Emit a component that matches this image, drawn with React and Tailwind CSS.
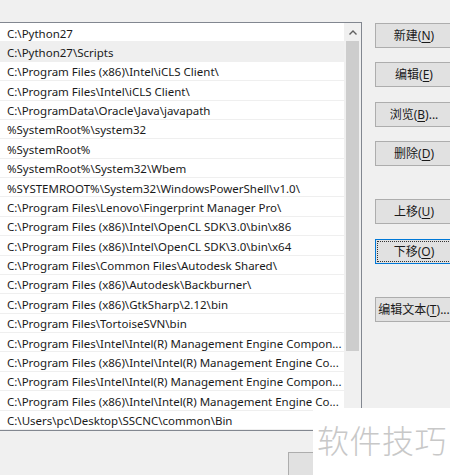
const paths = [
  "C:\\Python27",
  "C:\\Python27\\Scripts",
  "C:\\Program Files (x86)\\Intel\\iCLS Client\\",
  "C:\\Program Files\\Intel\\iCLS Client\\",
  "C:\\ProgramData\\Oracle\\Java\\javapath",
  "%SystemRoot%\\system32",
  "%SystemRoot%",
  "%SystemRoot%\\System32\\Wbem",
  "%SYSTEMROOT%\\System32\\WindowsPowerShell\\v1.0\\",
  "C:\\Program Files\\Lenovo\\Fingerprint Manager Pro\\",
  "C:\\Program Files (x86)\\Intel\\OpenCL SDK\\3.0\\bin\\x86",
  "C:\\Program Files (x86)\\Intel\\OpenCL SDK\\3.0\\bin\\x64",
  "C:\\Program Files\\Common Files\\Autodesk Shared\\",
  "C:\\Program Files (x86)\\Autodesk\\Backburner\\",
  "C:\\Program Files (x86)\\GtkSharp\\2.12\\bin",
  "C:\\Program Files\\TortoiseSVN\\bin",
  "C:\\Program Files\\Intel\\Intel(R) Management Engine Compon...",
  "C:\\Program Files (x86)\\Intel\\Intel(R) Management Engine Co...",
  "C:\\Program Files\\Intel\\Intel(R) Management Engine Compon...",
  "C:\\Program Files (x86)\\Intel\\Intel(R) Management Engine Co...",
  "C:\\Users\\pc\\Desktop\\SSCNC\\common\\Bin",
];

// label, accelerator key, suffix, top margin
const buttons = [
  { label: "新建", key: "N", tail: "", mt: "mt-px" },
  { label: "编辑", key: "E", tail: "", mt: "mt-[14px]" },
  { label: "浏览", key: "B", tail: "...", mt: "mt-[15px]" },
  { label: "删除", key: "D", tail: "", mt: "mt-[14px]" },
  { label: "上移", key: "U", tail: "", mt: "mt-[33px]" },
  { label: "下移", key: "O", tail: "", mt: "mt-[15px]", focused: true },
  { label: "编辑文本", key: "T", tail: "...", mt: "mt-[33px]" },
];

const font = {
  fontFamily: '"Noto Sans", "Noto Sans CJK SC", sans-serif',
};

function WinButton({ label, accel, tail, mt, focused }) {
  return (
    <div
      className={`${mt} h-[25px] w-[78px] shrink-0 flex items-center justify-center text-[12px] text-[#1a1a1a] bg-[#e1e1e1] border ${
        focused ? "border-[#0078d7]" : "border-[#adadad]"
      }`}
    >
      <div
        className={`h-full w-full flex items-center justify-center whitespace-nowrap ${
          focused ? "outline-1 outline-dotted outline-[#333] -outline-offset-2" : ""
        }`}
      >
        {label}(<span className="underline underline-offset-2">{accel}</span>){tail}
      </div>
    </div>
  );
}

export default function App() {
  return (
    <div
      className="relative w-[450px] h-[475px] overflow-hidden bg-[#f0f0f0]"
      style={font}
    >
      <div className="flex pt-[22px]">
        {/* path list with scrollbar */}
        <div className="w-[362px] h-[409px] shrink-0 flex border border-l-0 border-[#828790] bg-white">
          <div className="flex-1 flex flex-col">
            {paths.map((p, i) => (
              <div
                key={i}
                className={`h-[19.38px] shrink-0 flex items-center pl-[7px] pt-[2px] text-[11.5px] text-[#1a1a1a] whitespace-nowrap overflow-hidden border-b border-[#efefef] ${
                  i === 1 ? "bg-[#efefef]" : ""
                }`}
              >
                {p}
              </div>
            ))}
          </div>
          <div className="w-[17px] shrink-0 bg-[#f0f0f0] flex flex-col">
            <div className="h-[18px] flex items-center justify-center">
              <svg width="8" height="5" viewBox="0 0 8 5">
                <path d="M0.5 4.5 L4 1 L7.5 4.5" fill="none" stroke="#606060" strokeWidth="1.4" />
              </svg>
            </div>
            <div className="mx-[2px] h-[310px] bg-[#cdcdcd]" />
          </div>
        </div>

        {/* action buttons */}
        <div className="ml-[13px] flex flex-col">
          {buttons.map((b) => (
            <WinButton
              key={b.key}
              label={b.label}
              accel={b.key}
              tail={b.tail}
              mt={b.mt}
              focused={b.focused}
            />
          ))}
        </div>
      </div>

      {/* bottom dialog button, partly hidden */}
      <div className="ml-[288px] mt-[21px] w-[78px] h-[25px] bg-[#e1e1e1] border border-[#adadad]" />

      {/* watermark */}
      <div className="absolute left-[313px] top-[408px] w-[137px] h-[67px] bg-white flex items-start pt-[15px] pl-[4px]">
        <span
          className="text-[32px] leading-none text-[#c8c8c8] tracking-[0.5px]"
          style={{ fontFamily: '"Noto Sans CJK SC", sans-serif', fontWeight: 300 }}
        >
          软件技巧
        </span>
      </div>
    </div>
  );
}
